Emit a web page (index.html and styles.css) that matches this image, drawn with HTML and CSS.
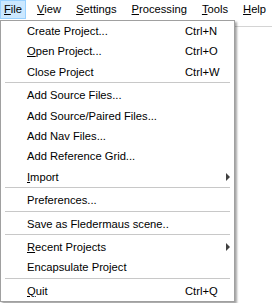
FILE: index.html
```html
<!DOCTYPE html>
<html>
<head>
    <meta charset="UTF-8">
    <title>File menu</title>
    <link rel="stylesheet" href="styles.css">
</head>
<body>

    <div class="menubar">
        <span class="menubar-item is-open"><u>F</u>ile</span>
        <span class="menubar-item"><u>V</u>iew</span>
        <span class="menubar-item"><u>S</u>ettings</span>
        <span class="menubar-item"><u>P</u>rocessing</span>
        <span class="menubar-item"><u>T</u>ools</span>
        <span class="menubar-item"><u>H</u>elp</span>
    </div>

    <div class="workspace"></div>

    <div class="popup">
        <div class="item"><span>Create Project...</span><span class="key">Ctrl+N</span></div>
        <div class="item"><span><u>O</u>pen Project...</span><span class="key">Ctrl+O</span></div>
        <div class="item"><span>Close Project</span><span class="key">Ctrl+W</span></div>
        <div class="sep"></div>
        <div class="item"><span>Add Source Files...</span></div>
        <div class="item"><span>Add Source/Paired Files...</span></div>
        <div class="item"><span>Add Nav Files...</span></div>
        <div class="item"><span>Add Reference Grid...</span></div>
        <div class="item"><span><u>I</u>mport</span><span></span><span class="arrow"></span></div>
        <div class="sep"></div>
        <div class="item"><span>Preferences...</span></div>
        <div class="sep"></div>
        <div class="item"><span>Save as Fledermaus scene..</span></div>
        <div class="sep"></div>
        <div class="item"><span><u>R</u>ecent Projects</span><span></span><span class="arrow"></span></div>
        <div class="item"><span>Encapsulate Project</span></div>
        <div class="sep"></div>
        <div class="item"><span><u>Q</u>uit</span><span class="key">Ctrl+Q</span></div>
    </div>

</body>
</html>
```

FILE: styles.css
```css
BODY {
    margin: 0;
    background: #FFF;
    font: 11.2px "Liberation Sans", Arial, sans-serif;
    color: #000;
    }
U {
    text-decoration: underline;
    text-underline-offset: 1px;
    }
.menubar {
    display: flex;
    height: 20px;
    background: #FFF;
    }
.menubar-item {
    height: 19px;
    margin-right: 7px;
    padding: 0 3px;
    border: 1px solid transparent;
    line-height: 17px;
    box-sizing: border-box;
    white-space: nowrap;
    }
    .menubar-item.is-open {
        background: #CCE8FF;
        border-color: #99D1FF;
        }
.workspace {
    height: 200px;
    margin-top: 6px;
    border-top: 1px solid #D4D4D4;
    }
.popup {
    position: absolute;
    top: 20px;
    left: 0;
    width: 235px;
    background: #FFF;
    border: 1px solid #A0A0A0;
    box-sizing: border-box;
    box-shadow: 2px 2px 2px rgba(0, 0, 0, .35);
    }
.item {
    display: grid;
    grid-template-columns: 1fr 36px 13px;
    align-items: center;
    height: 20.4px;
    padding-left: 26px;
    line-height: 20.4px;
    white-space: nowrap;
    }
.sep {
    height: 1px;
    margin: 0 4px 2px;
    background: #C8C8C8;
    }
.arrow {
    width: 0;
    height: 0;
    margin-left: 5px;
    border-left: 4px solid #404040;
    border-top: 4px solid transparent;
    border-bottom: 4px solid transparent;
    }
```
